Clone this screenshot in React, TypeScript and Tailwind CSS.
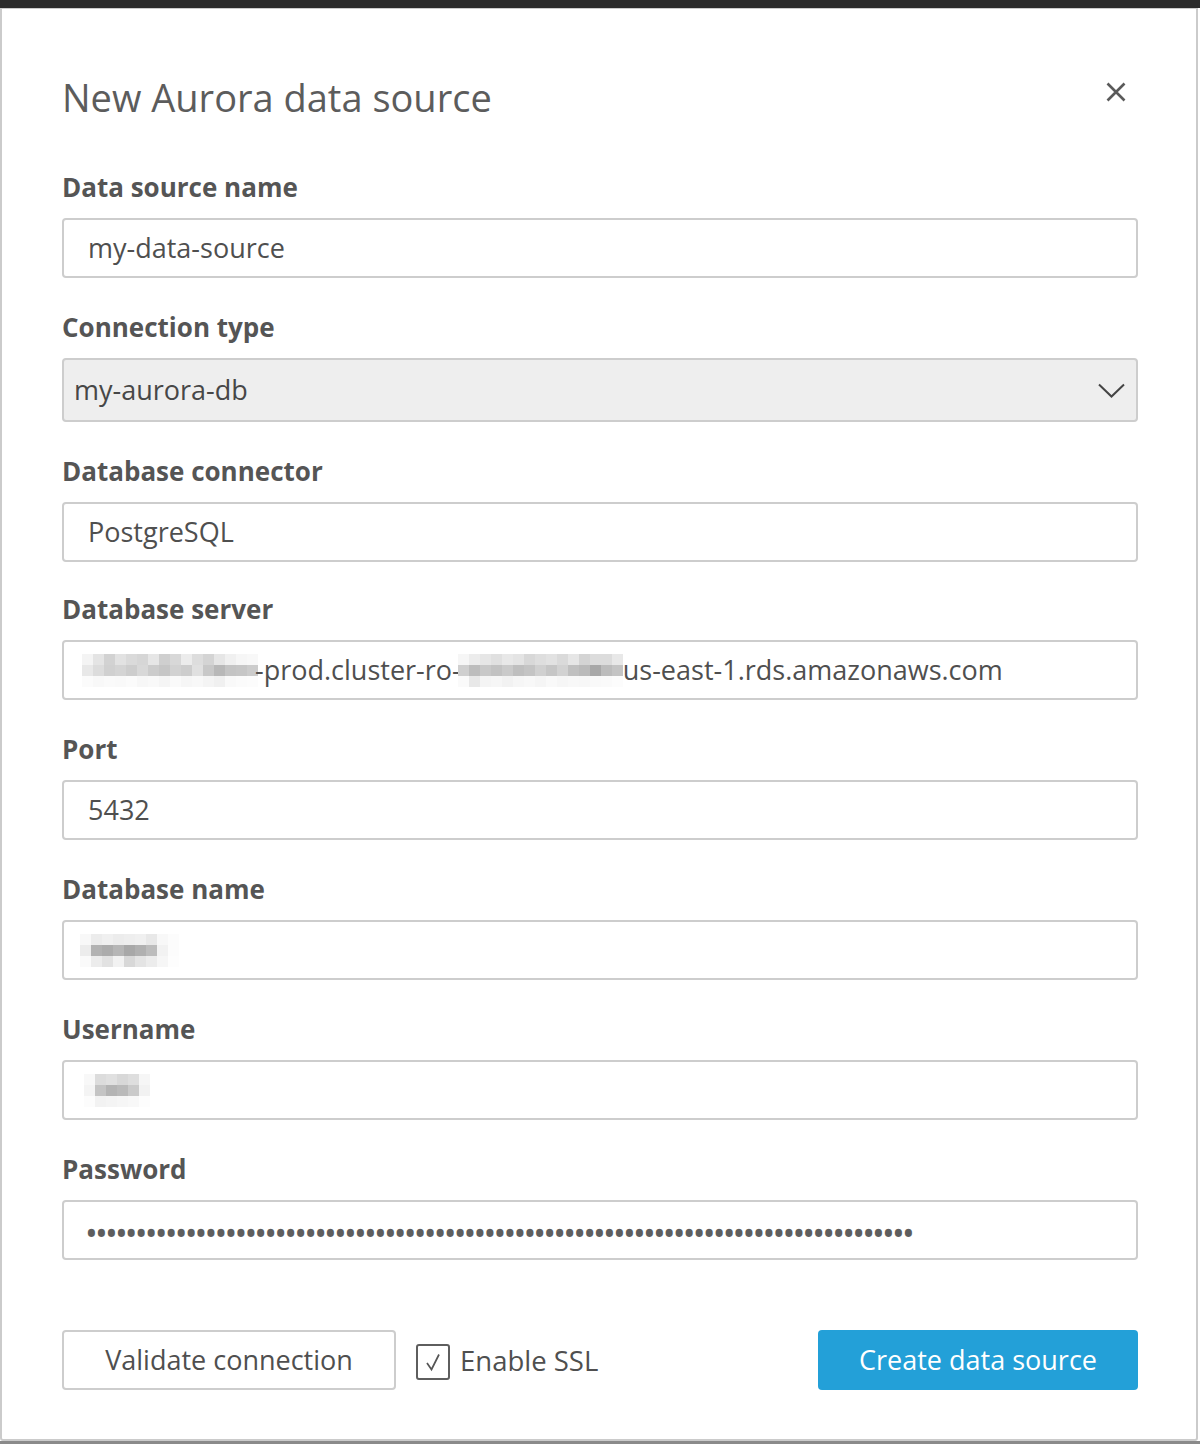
import React from "react";

type Cells = string[][];

function Mosaic({ cells, size = 11 }: { cells: Cells; size?: number }) {
  const rows = cells.length;
  const cols = Math.max(...cells.map((r) => r.length));
  return (
    <svg width={cols * size} height={rows * size} className="block shrink-0">
      {cells.map((row, y) =>
        row.map((c, x) => <rect key={`${x}-${y}`} x={x * size} y={y * size} width={size} height={size} fill={c} />)
      )}
    </svg>
  );
}

const serverA: Cells = [
  ["#f4f4f4", "#e4e4e4", "#d2d2d2", "#e2e2e2", "#dadada", "#d6d6d6", "#e6e6e6", "#cfcfcf", "#d8d8d8", "#ececec", "#dddddd", "#d4d4d4", "#e6e6e6", "#f0f0f0", "#f6f6f6", "#f8f8f8"],
  ["#e8e8e8", "#dcdcdc", "#d0d0d0", "#d4d4d4", "#cdcdcd", "#d8d8d8", "#cccccc", "#c6c6c6", "#d2d2d2", "#cdcdcd", "#e0e0e0", "#c8c8c8", "#b8b8b8", "#c4c4c4", "#c6c6c6", "#cccccc"],
  ["#fbfbfb", "#f8f8f8", "#fafafa", "#f9f9f9", "#fbfbfb", "#f7f7f7", "#f9f9f9", "#f5f5f5", "#fafafa", "#f6f6f6", "#f8f8f8", "#f4f4f4", "#f0f0f0", "#f9f9f9", "#fbfbfb", "#fcfcfc"],
];

const serverB: Cells = [
  ["#f6f6f6", "#ececec", "#e6e6e6", "#e0e0e0", "#e8e8e8", "#e4e4e4", "#d8d8d8", "#dedede", "#e2e2e2", "#dadada", "#e6e6e6", "#d4d4d4", "#dcdcdc", "#dcdcdc", "#e8e8e8"],
  ["#cfcfcf", "#bdbdbd", "#c8c8c8", "#c2c2c2", "#cacaca", "#bfbfbf", "#c4c4c4", "#d0d0d0", "#c6c6c6", "#d2d2d2", "#c0c0c0", "#bababa", "#a8a8a8", "#bcbcbc", "#c4c4c4"],
  ["#fafafa", "#e8e8e8", "#f4f4f4", "#f6f6f6", "#f2f2f2", "#f6f6f6", "#f8f8f8", "#f5f5f5", "#f9f9f9", "#f6f6f6", "#f8f8f8", "#f7f7f7", "#f9f9f9", "#fafafa", "#fcfcfc"],
];

const dbName: Cells = [
  ["#f8f8f8", "#ececec", "#f0f0f0", "#ececec", "#eeeeee", "#f0f0f0", "#e8e8e8", "#f8f8f8", "#fcfcfc"],
  ["#ececec", "#b2b2b2", "#acacac", "#b6b6b6", "#a8a8a8", "#b0b0b0", "#bcbcbc", "#f2f2f2", "#fcfcfc"],
  ["#fafafa", "#ececec", "#e2e2e2", "#f2f2f2", "#d8d8d8", "#e4e4e4", "#ececec", "#f6f6f6", "#fdfdfd"],
];

const userName: Cells = [
  ["#f8f8f8", "#dcdcdc", "#e0e0e0", "#d8d8d8", "#dedede", "#f6f6f6"],
  ["#f4f4f4", "#c4c4c4", "#b4b4b4", "#bababa", "#cacaca", "#f2f2f2"],
  ["#fcfcfc", "#f2f2f2", "#f4f4f4", "#f6f6f6", "#f8f8f8", "#fdfdfd"],
];

function Label({ children }: { children: React.ReactNode }) {
  return <div className="text-[26px] leading-[32px] font-bold text-[#555555] mb-[15px]">{children}</div>;
}

function Field({ label, children, className = "" }: { label: string; children: React.ReactNode; className?: string }) {
  return (
    <div className={className}>
      <Label>{label}</Label>
      {children}
    </div>
  );
}

function TextBox({ children }: { children: React.ReactNode }) {
  return (
    <div className="h-[60px] w-full border-2 border-[#cdcdcd] rounded-[4px] bg-white flex items-center pl-[24px] text-[27px] text-[#4f4f4f] whitespace-nowrap overflow-hidden">
      {children}
    </div>
  );
}

export default function App() {
  const dots = "•".repeat(83);
  return (
    <div
      className="w-[1200px] h-[1444px] bg-white flex flex-col overflow-hidden"
      style={{ fontFamily: '"Open Sans", "Noto Sans", sans-serif' }}
    >
      <div className="h-[8px] bg-[#2b2b2b] shrink-0" />
      <div className="w-[1198px] h-[1433px] shrink-0 bg-white border-2 border-t border-[#cbcbcb] rounded-b-[3px] pt-[62px] pl-[60px]">
        <div className="w-[1076px]">
          <div className="flex justify-between items-start">
            <h1 className="text-[38px] leading-[52px] text-[#5c5c5c] font-normal">New Aurora data source</h1>
            <svg width="20" height="20" viewBox="0 0 20 20" className="mt-[11px] mr-[12px]">
              <path d="M1.5 1.5 L18.5 18.5 M18.5 1.5 L1.5 18.5" stroke="#5a5a5a" strokeWidth="2.6" strokeLinecap="butt" />
            </svg>
          </div>

          <Field label="Data source name" className="mt-[48px]">
            <TextBox>my-data-source</TextBox>
          </Field>

          <Field label="Connection type" className="mt-[33px]">
            <div className="h-[64px] w-full border-2 border-[#cdcdcd] rounded-[4px] bg-[#eeeeee] flex items-center justify-between pl-[10px] pr-[11px] text-[27px] text-[#474747]">
              <span>my-aurora-db</span>
              <svg width="27" height="15" viewBox="0 0 27 15">
                <path d="M1 1.5 L13.5 13.5 L26 1.5" fill="none" stroke="#444" strokeWidth="2" />
              </svg>
            </div>
          </Field>

          <Field label="Database connector" className="mt-[33px]">
            <TextBox>PostgreSQL</TextBox>
          </Field>

          <Field label="Database server" className="mt-[31px]">
            <div className="h-[60px] w-full border-2 border-[#cdcdcd] rounded-[4px] bg-white flex items-center pl-[18px] text-[27px] text-[#4f4f4f] whitespace-nowrap overflow-hidden">
              <Mosaic cells={serverA} size={11} />
              <span className="-ml-[3px]">-prod.cluster-ro-</span>
              <span className="-ml-[3px]">
                <Mosaic cells={serverB} size={11} />
              </span>
              <span>us-east-1.rds.amazonaws.com</span>
            </div>
          </Field>

          <Field label="Port" className="mt-[33px]">
            <TextBox>5432</TextBox>
          </Field>

          <Field label="Database name" className="mt-[33px]">
            <div className="h-[60px] w-full border-2 border-[#cdcdcd] rounded-[4px] bg-white flex items-center pl-[16px]">
              <Mosaic cells={dbName} size={11} />
            </div>
          </Field>

          <Field label="Username" className="mt-[33px]">
            <div className="h-[60px] w-full border-2 border-[#cdcdcd] rounded-[4px] bg-white flex items-center pl-[20px]">
              <Mosaic cells={userName} size={11} />
            </div>
          </Field>

          <Field label="Password" className="mt-[33px]">
            <div className="h-[60px] w-full border-2 border-[#cdcdcd] rounded-[4px] bg-white flex items-center pl-[21px] text-[34px] leading-none text-[#5e5e5e] tracking-[-2.82px] whitespace-nowrap overflow-hidden">
              <span className="mt-[6px]">{dots}</span>
            </div>
          </Field>

          <div className="mt-[70px] flex items-center">
            <button className="w-[334px] h-[60px] border-2 border-[#cdcdcd] rounded-[4px] bg-white text-[27px] text-[#4f4f4f] flex items-center justify-center">
              Validate connection
            </button>
            <div className="ml-[20px] w-[34px] h-[36px] border-2 border-[#5e5e5e] rounded-[3px] flex items-center justify-center mt-[4px]">
              <svg width="18" height="20" viewBox="0 0 18 20">
                <path d="M3 11 L7.5 17.5 L15 2.5" fill="none" stroke="#555" strokeWidth="1.7" />
              </svg>
            </div>
            <span className="ml-[10px] text-[27.5px] text-[#4f4f4f] mt-[2px]">Enable SSL</span>
            <button className="ml-auto w-[320px] h-[60px] rounded-[4px] bg-[#23a0d8] text-white text-[27px] flex items-center justify-center">
              Create data source
            </button>
          </div>
        </div>
      </div>
      <div className="flex-1 bg-[#8a8a8a]" />
    </div>
  );
}
